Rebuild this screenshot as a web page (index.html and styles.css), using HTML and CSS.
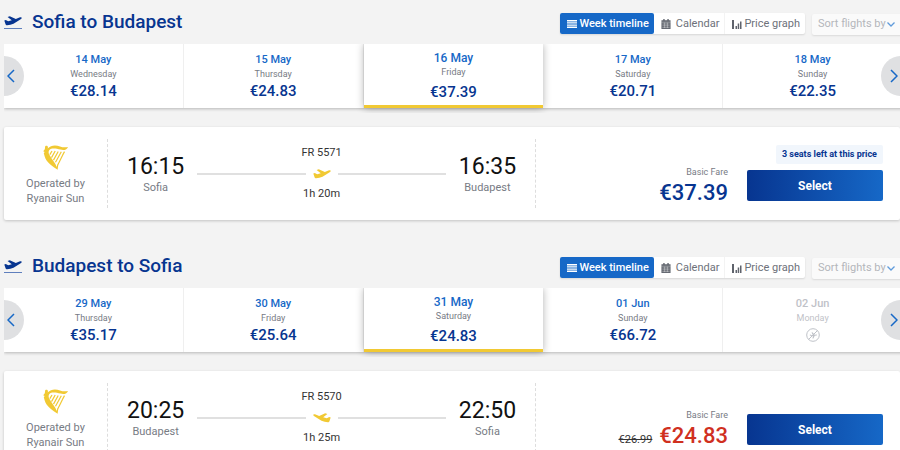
FILE: index.html
```
<!DOCTYPE html>
<html lang="en">
<head>
    <meta charset="utf-8">
    <meta name="viewport" content="width=device-width, initial-scale=1">
    <title>Select flights</title>
    <link rel="stylesheet" href="styles.css">
</head>
<body>

    <!-- shared icons -->
    <svg class="sprite" aria-hidden="true">
        <symbol id="plane" viewBox="0 0 18 10">
            <path d="M.3 4.500L1.800 4l2.400 1.300 3.600-1L3.600.9 5.800.3l6 2.600 3.600-1.500c1.300-.5 2.300-.2 2.400.4.1.8-.8 1.500-1.900 2L9.500 7.700c-2 .8-4.200 1.300-6.300 1.500-1 .1-1.500-.5-1.800-1.500z"/>
        </symbol>
        <symbol id="harp" viewBox="0 0 25 25">
            <path d="M2.200 1.200c1.300-1 2.800-.3 2.800 1L4.600 3.400C8-.2 13-.2 17 1.400c3 1.100 5.500 1 8 .5-1.500 3.200-4.500 3.500-7.500 2.700C13 3.400 8.500 2.600 6.400 5c-1.200 1.500-.8 3.200-.2 4.600 1.900 4 6.200 8.300 7.600 12.400l.4-2.600 1.100.4-.7 5C10 21.400 3.400 17.800 1.700 11.500L.8 8.200 1.700 7 .2 6.200l1.600-2z"/>
            <path class="strings" d="M9 6L6.800 9.600M12.200 6L8.500 12.600M15.200 6.500l-4.700 8.600M18.300 6.700l-5.800 10.600M21.500 6.600C19 11 17.500 15 14.700 20"/>
        </symbol>
        <symbol id="calendar" viewBox="0 0 10 11">
            <path d="M2 0h1.500v1.500h3V0H8v1.500h2V11H0V1.500h2z"/>
            <path class="cells" d="M0 3.500h10M1 5.500h8M1 7.500h8M1 9.500h8M3.500 4v6M6.500 4v6"/>
        </symbol>
        <symbol id="graph" viewBox="0 0 10 10">
            <path d="M0 1h2v9H0zM3.500 7h1.500v3H3.500zM5.700 4.500h1.500V10H5.700zM8 2.500h1.500V10H8z"/>
        </symbol>
        <symbol id="lines" viewBox="0 0 10 8">
            <path d="M0 0h10v1.400H0zM0 2.200h10v1.400H0zM0 4.400h10v1.400H0zM0 6.600h10v1.400H0z"/>
        </symbol>
        <symbol id="left" viewBox="0 0 8 14">
            <path d="M7 1L1 7l6 6"/>
        </symbol>
        <symbol id="right" viewBox="0 0 8 14">
            <path d="M1 1l6 6-6 6"/>
        </symbol>
        <symbol id="down" viewBox="0 0 8 5">
            <path d="M.5.5L4 4 7.500.5"/>
        </symbol>
        <symbol id="noflight" viewBox="0 0 14 14">
            <circle cx="7" cy="7" r="6.300"/>
            <path d="M2.500 11.500l9-9"/>
            <path class="fill" d="M3.500 7l1-.4 1 .6 1.300-.1-1.300-2.600.9-.2 2.300 2.500 1.800-.3c.8 0 .8.8 0 1l-1.800.3-1.300 2.700-.9.100.4-2.500-1.700.2z"/>
        </symbol>
    </svg>

    <main>
        <section class="journey">
            <header class="journey__header">
                <svg class="journey__icon"><use href="#plane"/></svg>
                <h2 class="journey__title">Sofia to Budapest</h2>
                <div class="views">
                    <button class="views__btn views__btn--active" type="button"><svg class="ic-lines"><use href="#lines"/></svg>Week timeline</button>
                    <button class="views__btn views__btn--calendar" type="button"><svg class="ic-calendar"><use href="#calendar"/></svg>Calendar</button>
                    <button class="views__btn" type="button"><svg class="ic-graph"><use href="#graph"/></svg>Price graph</button>
                </div>
                <label class="sort">
                    <select class="sort__select" aria-label="Sort flights by" disabled>
                        <option>Sort flights by</option>
                    </select>
                    <svg class="sort__arrow"><use href="#down"/></svg>
                </label>
            </header>

            <div class="week">
                <button class="day" type="button">
                    <span class="day__date">14 May</span>
                    <span class="day__name">Wednesday</span>
                    <span class="day__price">€28.14</span>
                </button>
                <button class="day" type="button">
                    <span class="day__date">15 May</span>
                    <span class="day__name">Thursday</span>
                    <span class="day__price">€24.83</span>
                </button>
                <button class="day day--selected" type="button">
                    <span class="day__date">16 May</span>
                    <span class="day__name">Friday</span>
                    <span class="day__price">€37.39</span>
                </button>
                <button class="day" type="button">
                    <span class="day__date">17 May</span>
                    <span class="day__name">Saturday</span>
                    <span class="day__price">€20.71</span>
                </button>
                <button class="day" type="button">
                    <span class="day__date">18 May</span>
                    <span class="day__name">Sunday</span>
                    <span class="day__price">€22.35</span>
                </button>
                <button class="week__nav week__nav--prev" type="button" aria-label="Previous days"><svg><use href="#left"/></svg></button>
                <button class="week__nav week__nav--next" type="button" aria-label="Next days"><svg><use href="#right"/></svg></button>
            </div>

            <article class="flight">
                <div class="operator">
                    <svg class="operator__logo"><use href="#harp"/></svg>
                    <p>Operated by<br>Ryanair Sun</p>
                </div>
                <div class="route">
                    <div class="stop">
                        <span class="stop__time">16:15</span>
                        <span class="stop__city">Sofia</span>
                    </div>
                    <div class="leg">
                        <span>FR 5571</span>
                        <div class="leg__line"><svg class="leg__plane"><use href="#plane"/></svg></div>
                        <span>1h 20m</span>
                    </div>
                    <div class="stop">
                        <span class="stop__time">16:35</span>
                        <span class="stop__city">Budapest</span>
                    </div>
                </div>
                <div class="fare">
                    <div class="fare__info">
                        <span class="fare__label">Basic Fare</span>
                        <div class="fare__prices">
                            <span class="fare__price">€37.39</span>
                        </div>
                    </div>
                    <div class="fare__action">
                        <span class="fare__badge">3 seats left at this price</span>
                        <button class="fare__select" type="button">Select</button>
                    </div>
                </div>
            </article>
        </section>

        <section class="journey">
            <header class="journey__header">
                <svg class="journey__icon"><use href="#plane"/></svg>
                <h2 class="journey__title">Budapest to Sofia</h2>
                <div class="views">
                    <button class="views__btn views__btn--active" type="button"><svg class="ic-lines"><use href="#lines"/></svg>Week timeline</button>
                    <button class="views__btn views__btn--calendar" type="button"><svg class="ic-calendar"><use href="#calendar"/></svg>Calendar</button>
                    <button class="views__btn" type="button"><svg class="ic-graph"><use href="#graph"/></svg>Price graph</button>
                </div>
                <label class="sort">
                    <select class="sort__select" aria-label="Sort flights by" disabled>
                        <option>Sort flights by</option>
                    </select>
                    <svg class="sort__arrow"><use href="#down"/></svg>
                </label>
            </header>

            <div class="week">
                <button class="day" type="button">
                    <span class="day__date">29 May</span>
                    <span class="day__name">Thursday</span>
                    <span class="day__price">€35.17</span>
                </button>
                <button class="day" type="button">
                    <span class="day__date">30 May</span>
                    <span class="day__name">Friday</span>
                    <span class="day__price">€25.64</span>
                </button>
                <button class="day day--selected" type="button">
                    <span class="day__date">31 May</span>
                    <span class="day__name">Saturday</span>
                    <span class="day__price">€24.83</span>
                </button>
                <button class="day" type="button">
                    <span class="day__date">01 Jun</span>
                    <span class="day__name">Sunday</span>
                    <span class="day__price">€66.72</span>
                </button>
                <button class="day day--disabled" type="button" disabled>
                    <span class="day__date">02 Jun</span>
                    <span class="day__name">Monday</span>
                    <svg class="day__none"><use href="#noflight"/></svg>
                </button>
                <button class="week__nav week__nav--prev" type="button" aria-label="Previous days"><svg><use href="#left"/></svg></button>
                <button class="week__nav week__nav--next" type="button" aria-label="Next days"><svg><use href="#right"/></svg></button>
            </div>

            <article class="flight">
                <div class="operator">
                    <svg class="operator__logo"><use href="#harp"/></svg>
                    <p>Operated by<br>Ryanair Sun</p>
                </div>
                <div class="route">
                    <div class="stop">
                        <span class="stop__time">20:25</span>
                        <span class="stop__city">Budapest</span>
                    </div>
                    <div class="leg">
                        <span>FR 5570</span>
                        <div class="leg__line"><svg class="leg__plane leg__plane--return"><use href="#plane"/></svg></div>
                        <span>1h 25m</span>
                    </div>
                    <div class="stop">
                        <span class="stop__time">22:50</span>
                        <span class="stop__city">Sofia</span>
                    </div>
                </div>
                <div class="fare">
                    <div class="fare__info">
                        <span class="fare__label">Basic Fare</span>
                        <div class="fare__prices">
                            <s class="fare__old">€26.99</s>
                            <span class="fare__price fare__price--promo">€24.83</span>
                        </div>
                    </div>
                    <div class="fare__action">
                        <button class="fare__select" type="button">Select</button>
                    </div>
                </div>
            </article>
        </section>
    </main>

</body>
</html>
```
FILE: styles.css
```
* {
    box-sizing: border-box;
    margin: 0;
    padding: 0;
}
:root {
    --navy: #073590;
    --blue: #1668c7;
    --yellow: #f1c933;
    --grey: #777b84;
    --bg: #f3f3f3;
}
body {
    background: var(--bg);
    color: #333;
    font: 11px/16px Roboto, sans-serif;
    overflow-x: hidden;
}
button,
select {
    font: inherit;
    color: inherit;
    border: 0;
    background: none;
}
button {
    cursor: pointer;
}
.sprite {
    display: none;
}
main {
    padding-left: 4px;
}
.journey {
    margin-bottom: 24px;
}

/* Title, view switch and sorting */
.journey__header {
    display: flex;
    align-items: center;
    height: 44px;
    margin-right: -4px;
}
.journey__icon {
    width: 18px;
    height: 13px;
    padding-bottom: 2px;
    border-bottom: 1px solid #5f7fbd;
    fill: var(--navy);
}
.journey__title {
    flex: 1;
    margin-left: 10px;
    color: var(--navy);
    font-size: 19px;
    font-weight: 500;
    line-height: 24px;
}
.views {
    display: flex;
    height: 21px;
    margin-top: 2px;
    border-radius: 2px;
    background: #fff;
    box-shadow: 0 1px 2px rgba(0,0,0,0.12);
}
.views__btn {
    display: flex;
    align-items: center;
    gap: 2px;
    padding: 1px 5px 0 7px;
    color: #6d717a;
    fill: #5f636c;
}
.views__btn--active {
    border-radius: 2px;
    background: var(--blue);
    color: #fff;
    fill: #fff;
    font-weight: 500;
}
.views__btn--calendar {
    gap: 5px;
    border-right: 1px solid var(--bg);
}
.ic-lines {
    width: 10px;
    height: 8px;
}
.ic-calendar,
.ic-graph {
    width: 10px;
    height: 10px;
}
.cells {
    stroke: #fff;
    stroke-width: 0.4;
}
.sort {
    display: flex;
    align-items: center;
    height: 21px;
    margin: 4px 0 0 7px;
    padding: 0 9px 0 6px;
    border-radius: 2px;
    background: #fafafa;
    box-shadow: 0 1px 2px rgba(0,0,0,0.1);
}
.sort__select {
    appearance: none;
    color: #b4b6ba;
    opacity: 1;
}
.sort__arrow {
    width: 8px;
    height: 5px;
    margin-left: 1px;
    fill: none;
    stroke: #5f9bdb;
    stroke-width: 1.3;
}

/* Week timeline */
.week {
    position: relative;
    display: grid;
    grid-template-columns: repeat(5, 1fr);
    min-height: 64px;
    margin-right: -3px;
    background: #fff;
    box-shadow: 0 1px 3px rgba(0,0,0,0.25);
    clip-path: inset(0 0 -5px 0);
}
.day {
    display: flex;
    flex-direction: column;
    align-items: center;
    padding-top: 9px;
    border-right: 1px solid #efefef;
}
.day__date {
    color: var(--blue);
    font-weight: 500;
    line-height: 14px;
}
.day__name {
    color: var(--grey);
    font-size: 9px;
    line-height: 14px;
}
.day__price {
    color: var(--navy);
    font-size: 15px;
    font-weight: 500;
    line-height: 20px;
}
.day--selected {
    z-index: 1;
    padding-top: 7px;
    border-right: 0;
    border-bottom: 3px solid var(--yellow);
    background: #fff;
    box-shadow: 0 0 8px rgba(0,0,0,0.3);
}
.day--selected .day__date {
    font-size: 12px;
}
.day--selected .day__price {
    line-height: 26px;
}
.day--disabled .day__date,
.day--disabled .day__name {
    color: #bfc2c8;
}
.day__none {
    width: 14px;
    height: 14px;
    margin-top: 3px;
    fill: none;
    stroke: #bfc2c8;
}
.fill {
    fill: #bfc2c8;
    stroke: none;
}
.week__nav {
    position: absolute;
    top: 12px;
    display: flex;
    align-items: center;
    height: 40px;
    background: #dfe0e2;
}
.week__nav svg {
    width: 8px;
    height: 14px;
    fill: none;
    stroke: var(--blue);
    stroke-width: 1.5;
}
.week__nav--prev {
    left: 0;
    width: 20px;
    padding-left: 3px;
    border-radius: 0 20px 20px 0;
}
.week__nav--next {
    right: 0;
    width: 22px;
    padding-left: 9px;
    border-radius: 20px 0 0 20px;
}

/* Flight card */
.flight {
    display: grid;
    grid-template-columns: 104px 20fr 17fr;
    margin-top: 19px;
    padding: 12px 0;
    border-radius: 2px;
    background: #fff;
    box-shadow: 0 1px 3px rgba(0,0,0,0.2);
}
.operator {
    display: flex;
    flex-direction: column;
    align-items: center;
    padding: 6px 0 2px;
    border-right: 1px dashed #ddd;
    color: var(--grey);
    line-height: 15px;
    text-align: center;
}
.operator__logo {
    width: 25px;
    height: 25px;
    margin-bottom: 6px;
    fill: var(--yellow);
}
.strings {
    fill: none;
    stroke: var(--yellow);
    stroke-width: 1.2;
}
.route {
    display: flex;
    gap: 13px;
    padding: 0 19px;
    border-right: 1px dashed #ddd;
}
.stop {
    display: flex;
    flex-direction: column;
    align-items: center;
    min-width: 57px;
    padding-top: 16px;
}
.stop__time {
    color: #111;
    font-size: 23px;
    line-height: 24px;
}
.stop__city {
    color: var(--grey);
    line-height: 18px;
}
.leg {
    flex: 1;
    display: flex;
    flex-direction: column;
    align-items: center;
    padding-top: 6px;
}
.leg__line {
    display: flex;
    align-items: center;
    gap: 7px;
    align-self: stretch;
    height: 25px;
}
.leg__line::before,
.leg__line::after {
    content: "";
    flex: 1;
    height: 2px;
    background: #e0e0e0;
}
.leg__plane {
    width: 18px;
    height: 10px;
    fill: var(--yellow);
}
.leg__plane--return {
    transform: scaleX(-1);
}
.fare {
    display: flex;
    justify-content: flex-end;
    align-items: flex-end;
    gap: 19px;
    padding: 0 17px 7px 0;
}
.fare__info {
    display: flex;
    flex-direction: column;
    align-items: flex-end;
    gap: 4px;
}
.fare__label {
    color: var(--grey);
    font-size: 9px;
}
.fare__prices {
    display: flex;
    align-items: baseline;
    gap: 7px;
}
.fare__old {
    line-height: 10px;
}
.fare__price {
    color: var(--navy);
    font-size: 22px;
    font-weight: 500;
    line-height: 17px;
}
.fare__price--promo {
    color: #d0301f;
}
.fare__action {
    display: flex;
    flex-direction: column;
    align-items: flex-end;
    gap: 6px;
}
.fare__badge {
    padding: 1px 6px 2px;
    border-radius: 2px;
    background: #f1f6fc;
    color: var(--navy);
    font-size: 9px;
    font-weight: 700;
}
.fare__select {
    width: 136px;
    height: 31px;
    border-radius: 2px;
    background: linear-gradient(to right, var(--navy), var(--blue));
    color: #fff;
    font-size: 12px;
    font-weight: 700;
}
```
